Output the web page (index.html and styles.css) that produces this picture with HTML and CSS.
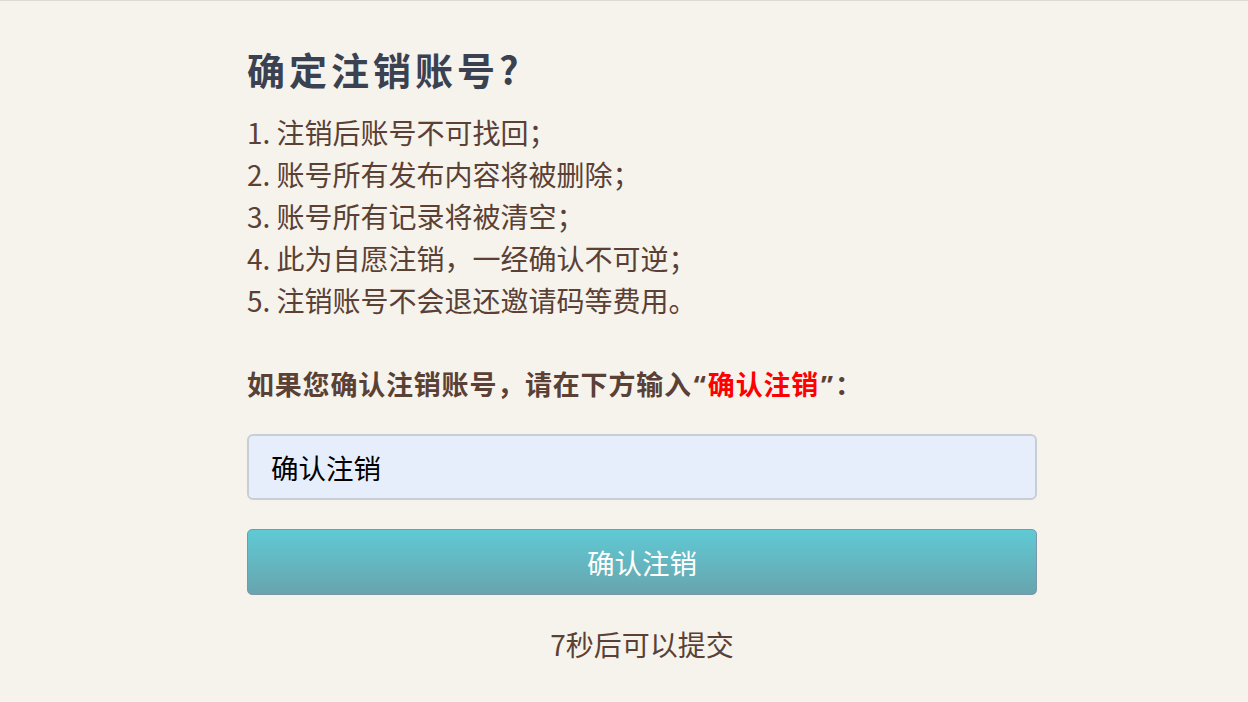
FILE: index.html
```html
<!DOCTYPE html>
<html lang="zh-CN">
<head>
<meta charset="utf-8">
<title>确定注销账号?</title>
<link rel="stylesheet" href="styles.css">
</head>
<body>
<main class="page">
  <h1 class="title">确定注销账号?</h1>
  <ol class="rules">
    <li>注销后账号不可找回；</li>
    <li>账号所有发布内容将被删除；</li>
    <li>账号所有记录将被清空；</li>
    <li>此为自愿注销，一经确认不可逆；</li>
    <li>注销账号不会退还邀请码等费用。</li>
  </ol>
  <p class="prompt">如果您确认注销账号，请在下方输入<span class="quote">“</span><span class="red">确认注销</span><span class="quote">”</span>：</p>
  <input class="field" type="text" value="确认注销">
  <button class="submit" type="button">确认注销</button>
  <p class="countdown">7秒后可以提交</p>
</main>
</body>
</html>
```

FILE: styles.css
```css
html, body {
  margin: 0;
  padding: 0;
  background: #f5f3ec;
}
body {
  border-top: 1px solid #dcdbd2;
  height: 701px;
  font-family: "Noto Sans CJK SC", "Noto Sans", sans-serif;
  color: #5a4035;
}
.page {
  width: 790px;
  margin-left: 247px;
  display: flex;
  flex-direction: column;
}
.title {
  margin: 44px 0 0;
  font-size: 38px;
  line-height: 48px;
  letter-spacing: 4px;
  font-weight: 700;
  color: #3a4150;
}
.rules {
  margin: 18px 0 0;
  padding: 0;
  list-style-position: inside;
  font-size: 28px;
  line-height: 42px;
}
.prompt {
  margin: 42px 0 0;
  font-size: 27px;
  line-height: 42px;
  letter-spacing: 0.8px;
  font-weight: 700;
}
.quote {
  font-family: "Noto Sans", sans-serif;
  letter-spacing: 0;
  padding: 0 2px;
}
.red {
  color: #ff0000;
}
.field {
  box-sizing: border-box;
  margin-top: 28px;
  height: 66px;
  width: 100%;
  padding: 0 0 0 22px;
  border: 2px solid #c9cdd6;
  border-radius: 6px;
  background: #e7eefb;
  font-family: inherit;
  font-size: 27.5px;
  color: #000;
  outline: none;
}
.submit {
  box-sizing: border-box;
  margin-top: 29px;
  height: 66px;
  width: 100%;
  border: 1px solid #7b97a8;
  border-radius: 5px;
  background: linear-gradient(to bottom, #5fcad4, #68a4ae);
  color: #fff;
  font-family: inherit;
  font-size: 27.5px;
}
.countdown {
  margin: 28px 0 0;
  text-align: center;
  font-size: 28px;
  line-height: 42px;
}
```
